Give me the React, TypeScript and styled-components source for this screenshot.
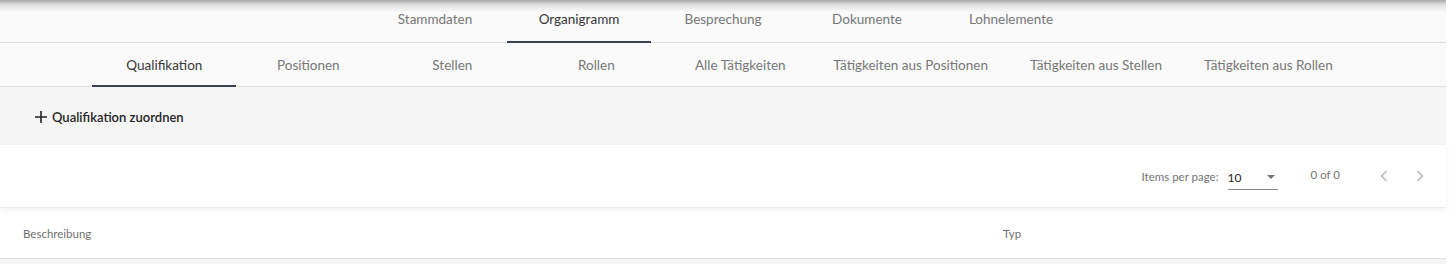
import React from 'react';
import styled, { createGlobalStyle } from 'styled-components';

const GlobalStyle = createGlobalStyle`
  body {
    margin: 0;
    background: #ffffff;
    font-family: Lato, "Noto Sans", sans-serif;
  }
`

const Page = styled.div`
  margin-right: 3px;
  background: #f5f5f5;
  min-height: 264px;
`

const TabBar = styled('div')<{shaded?: boolean}>`
  display: flex;
  justify-content: center;
  height: ${props => props.shaded ? '42px' : '43px'};
  background: ${props => props.shaded
    ? 'linear-gradient(to bottom, rgba(0,0,0,0.32) 0px, rgba(0,0,0,0.1) 5px, rgba(0,0,0,0) 12px), #fafafa'
    : '#fafafa'};
  border-bottom: 1px solid #e0e0e0;
`

const Tab = styled('div')<{active?: boolean; top?: boolean}>`
  display: flex;
  align-items: center;
  justify-content: center;
  box-sizing: border-box;
  min-width: 144px;
  padding: 0 21px;
  padding-top: ${props => props.top ? '0' : '2px'};
  padding-bottom: ${props => props.top ? '4px' : '0'};
  font-size: 13.5px;
  white-space: nowrap;
  color: ${props => props.active ? '#383838' : '#777777'};
  border-bottom: 2px solid ${props => props.active ? '#3a4150' : 'transparent'};
  margin-bottom: -1px;
`

const ActionBar = styled.div`
  display: flex;
  align-items: center;
  height: 58px;
  padding-left: 34px;
  padding-top: 2px;
  box-sizing: border-box;
  background: #f5f5f5;
`

const AddButton = styled.button`
  display: flex;
  align-items: center;
  gap: 4px;
  padding: 0;
  border: none;
  background: transparent;
  font-family: inherit;
  font-size: 13px;
  font-weight: 600;
  color: #262626;
  cursor: pointer;
`

const Paginator = styled.div`
  position: relative;
  z-index: 1;
  display: flex;
  align-items: center;
  justify-content: flex-end;
  height: 62px;
  padding-right: 8px;
  background: #ffffff;
  box-shadow: 0 3px 6px rgba(0, 0, 0, 0.06);
  font-size: 11.5px;
  color: #757575;
`

const PageSizeLabel = styled.span`
  margin-right: 9px;
`

const PageSelect = styled.div`
  display: flex;
  align-items: center;
  justify-content: space-between;
  width: 50px;
  height: 24px;
  margin-top: 3px;
  border-bottom: 1px solid #8a8a8a;
  color: #222;
  font-size: 12px;
`

const Arrow = styled.span`
  width: 0;
  height: 0;
  margin-right: 3px;
  border-left: 4px solid transparent;
  border-right: 4px solid transparent;
  border-top: 4px solid #757575;
`

const RangeLabel = styled.span`
  margin: 0 26px 0 33px;
  padding-bottom: 3px;
`

const NavButton = styled.span`
  display: flex;
  align-items: center;
  justify-content: center;
  width: 36px;
  height: 36px;
`

const TableHead = styled.div`
  display: grid;
  grid-template-columns: 980px 1fr;
  align-items: center;
  height: 50px;
  margin-top: 1px;
  padding-left: 23px;
  background: #ffffff;
  border-bottom: 1px solid #e0e0e0;
  font-size: 11.5px;
  color: #707070;
`

const mainTabs = ['Stammdaten', 'Organigramm', 'Besprechung', 'Dokumente', 'Lohnelemente'];
const subTabs = [
  'Qualifikation', 'Positionen', 'Stellen', 'Rollen', 'Alle Tätigkeiten',
  'Tätigkeiten aus Positionen', 'Tätigkeiten aus Stellen', 'Tätigkeiten aus Rollen'
];

function Chevron({ dir }: { dir: 'left' | 'right' }) {
  return (
    <svg width="22" height="22" viewBox="0 0 24 24">
      <path
        d={dir === 'left' ? 'M15.4 7.4 14 6l-6 6 6 6 1.4-1.4L10.8 12z' : 'M10 6 8.6 7.4 13.2 12l-4.6 4.6L10 18l6-6z'}
        fill="#c4c4c4"
      />
    </svg>
  );
}

function App() {
  return (
    <Page>
      <GlobalStyle />
      <TabBar shaded>
        {mainTabs.map((t) =>
          <Tab key={t} top active={t === 'Organigramm'}>{t}</Tab>
        )}
      </TabBar>
      <TabBar>
        {subTabs.map((t) =>
          <Tab key={t} active={t === 'Qualifikation'}>{t}</Tab>
        )}
      </TabBar>
      <ActionBar>
        <AddButton>
          <svg width="14" height="14" viewBox="0 0 14 14">
            <path d="M7 1v12M1 7h12" stroke="#222" strokeWidth="1.6" />
          </svg>
          Qualifikation zuordnen
        </AddButton>
      </ActionBar>
      <Paginator>
        <PageSizeLabel>Items per page:</PageSizeLabel>
        <PageSelect>
          <span>10</span>
          <Arrow />
        </PageSelect>
        <RangeLabel>0 of 0</RangeLabel>
        <NavButton><Chevron dir="left" /></NavButton>
        <NavButton><Chevron dir="right" /></NavButton>
      </Paginator>
      <TableHead>
        <span>Beschreibung</span>
        <span>Typ</span>
      </TableHead>
    </Page>
  );
}

export default App;
